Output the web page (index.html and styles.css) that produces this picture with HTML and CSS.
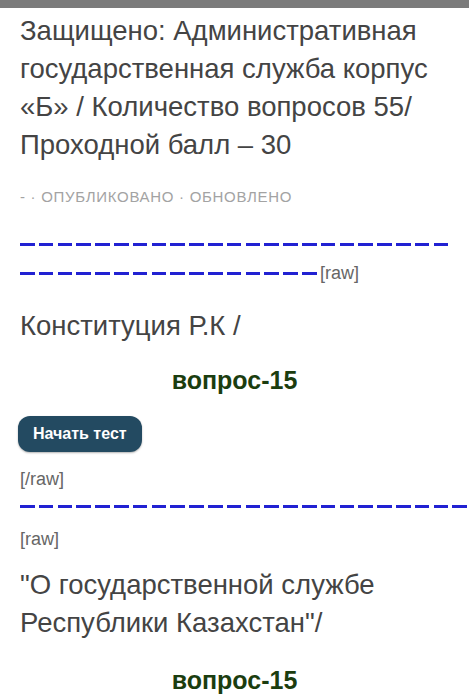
FILE: index.html
```html
<!DOCTYPE html>
<html lang="ru">
<head>
<meta charset="utf-8">
<title>Тест</title>
<link rel="stylesheet" href="styles.css">
</head>
<body>
<div class="topbar"></div>
<main class="page">
  <h1 class="title">Защищено: Административная государственная служба корпус «Б» / Количество вопросов 55/ Проходной балл – 30</h1>
  <div class="meta">- · Опубликовано · Обновлено</div>
  <div class="dash-row first"><span class="dashes d23"></span></div>
  <div class="dash-row second"><span class="dashes d16"></span><span class="raw">[raw]</span></div>
  <h2 class="section">Конституция Р.К /</h2>
  <p class="question">вопрос-15</p>
  <button class="start">Начать тест</button>
  <p class="raw block">[/raw]</p>
  <div class="dash-row third"><span class="dashes dfull"></span></div>
  <p class="raw block after">[raw]</p>
  <h2 class="section two">"О государственной службе Республики Казахстан"/</h2>
  <p class="question last">вопрос-15</p>
</main>
</body>
</html>
```
FILE: styles.css
```css
html, body {
  margin: 0;
  padding: 0;
  background: #fff;
  overflow-x: hidden;
}
body {
  font-family: "Liberation Sans", Arial, sans-serif;
  color: #444;
}
.topbar {
  height: 8px;
  background: #7b7b7b;
}
.page {
  padding: 0 20px;
  overflow: hidden;
}
.title {
  margin: 4px 0 0;
  font-size: 27.5px;
  line-height: 38px;
  font-weight: normal;
  color: #444;
}
.meta {
  margin-top: 23px;
  font-size: 15px;
  letter-spacing: 0.7px;
  line-height: 20px;
  text-transform: uppercase;
  color: #a3a3a3;
}
.dash-row {
  display: flex;
  align-items: center;
  height: 29px;
}
.dash-row.first {
  margin-top: 23px;
}
.dashes {
  display: block;
  height: 3px;
  flex: none;
  background: repeating-linear-gradient(90deg, #2121d2 0 14.6px, transparent 14.6px 18.8px);
}
.d23 { width: 428px; }
.d16 { width: 297px; }
.dfull { width: 480px; }
.raw {
  font-size: 18px;
  line-height: 29px;
  color: #666;
  margin-left: 3px;
}
.section {
  margin: 19px 0 0;
  font-size: 27.5px;
  line-height: 38px;
  font-weight: normal;
  color: #444;
}
.question {
  margin: 19px 0 0;
  text-align: center;
  font-size: 25px;
  line-height: 32px;
  font-weight: bold;
  color: #1b3d0f;
}
.start {
  display: block;
  margin: 20px 0 0 -2px;
  height: 36px;
  padding: 0 15px;
  border: none;
  border-radius: 12px;
  background: #234a61;
  color: #fff;
  font-family: "Liberation Sans", Arial, sans-serif;
  font-size: 16px;
  font-weight: bold;
  box-shadow: 0 1px 2px rgba(0,0,0,0.3);
}
.raw.block {
  margin: 13px 0 0;
  margin-left: 0;
  display: block;
  line-height: 28px;
}
.dash-row.third {
  margin-top: -1px;
}
.raw.block.after {
  margin-top: 4px;
}
.section.two {
  margin-top: 13px;
}
.question.last {
  margin-top: 22px;
}
```
